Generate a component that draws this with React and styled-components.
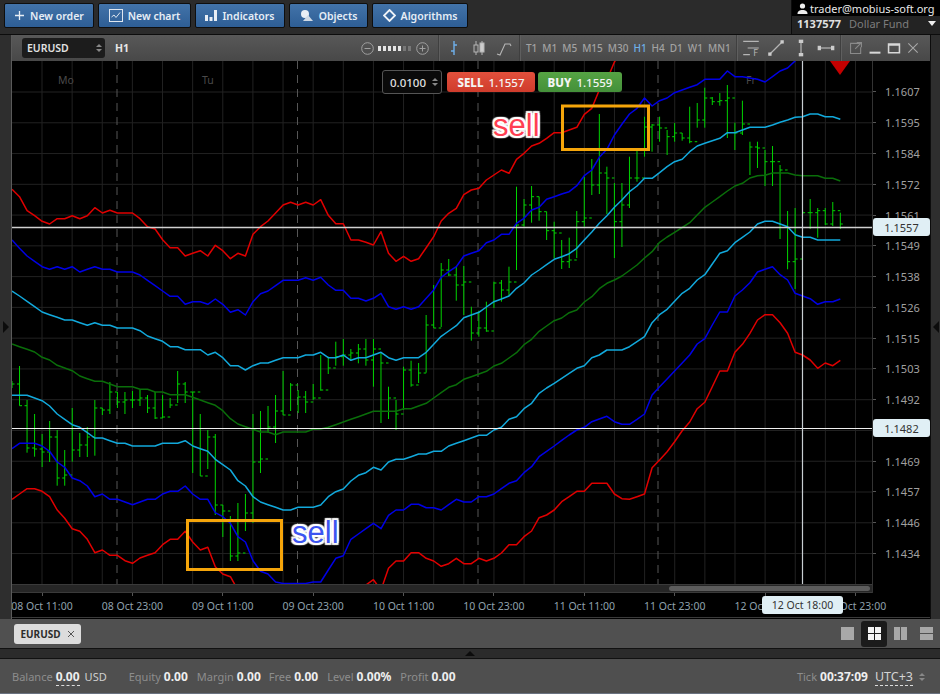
import React from "react";
import styled, { createGlobalStyle } from "styled-components";

const STEP = 7.53;
const xAt = (k) => 12 + STEP * k;
const toPoints = (ys) => ys.map((y, k) => `${xAt(k).toFixed(1)},${y}`).join(" ");

const upperRed = [189.3,196.7,210.7,215.7,221.3,224,218.7,218.7,215.7,218.7,215.7,207.7,213,210.3,213,213,213,218.7,226.7,229,239.7,247.7,247.7,256,253.3,250.7,256,245.3,250.7,258.7,253.3,256,234.3,226.7,221,213,205,202.3,205,202.3,205,199.7,215.3,223.7,223.7,240,240,242.3,245,231.7,253.3,261.3,256.3,261.3,258.7,247.7,236.7,221,213.3,208.3,194.7,190,188.3,180,175,170,173.3,159.3,153.3,146,143.3,138.3,132.7,132.7,130,127.3,114.3,108.3,90,80,62,50];
const upperBlue = [240,248.3,256,261.3,266.7,269.3,266.7,269.3,266.7,272,269.3,266.7,269.3,269.3,272,272,272,275,280.3,285.7,291,296.3,296.3,304.3,301.7,301.7,304.3,299,304.3,312.3,309.7,315,301.7,293.7,291,285.7,280.3,280.3,280.3,277.7,280.3,277.3,285,290.3,290.3,298.3,298.3,301,298.3,293.3,306.7,309.3,306.7,309.3,306.7,298.3,290,277.3,271.7,266.7,256,253.3,250.7,242.7,240,234.3,234.3,223.3,218.3,210,207.3,199.3,196.7,194,191.7,185.7,175.7,170,157.3,149.3,135,124.3,114,108.3,98,106,100.7,98,92.7,90,87.3,84.7,79.3,79.3,79.3,71,76.7,76.7,78,79.3,82,76.7,71,68,61,50];
const upperCyan = [291,296,301.3,306.7,312,314.7,317.3,320,320,322.7,325.3,322.7,325.3,325.3,328,328,328,330.7,336,338.7,341.3,346.7,346.7,349.7,349.7,349.7,355,352.3,357.7,365.7,365.7,370,365.7,363,363,360.3,357.7,357.7,357.7,355,355,352.3,357.7,357.7,355,360.3,357.7,357.7,355,352.3,357.7,360.3,357.7,357.7,357.7,352.3,344.3,336.3,331,325.7,317.7,315,312.3,307,301.7,299,296,288.3,283,275,270,264.7,259.3,256.7,253.7,248.3,240,232,223.3,215.7,207.3,200,191.7,186,178.3,178.3,172.7,166.7,161.7,159.3,151.7,146,143.3,140.7,138.3,132.7,132.7,130,127.3,127.3,127.3,125,122.3,120,117.3,116.7,114,114,116.7,116.7,119.3];
const midGreen = [344,346.7,349.3,352,357.3,360,365.3,368,370.7,376,378.7,381.3,381.3,384,386.7,386.7,386.7,389.3,389.3,392,392,394.7,394.7,394.7,397.3,400,402.7,405.3,410.7,418.7,424,426.7,429.3,432,432,434.7,432,432,432,432,429.3,429,427.3,424.7,422,419.3,416.7,414,411.3,411.3,411.3,411.3,408.7,408.7,406,403.3,398,392.7,387.3,384.7,379.3,376.7,374,371.3,366,363.3,358,352.7,344.7,339.3,331.3,326,320.7,318,312.7,310,302,296.7,288.7,283.3,280,276,270.5,265,258,251.7,242.3,237,232.3,227.5,222.7,215,207.3,202,196.7,191,186,183.3,178,175.7,175.3,173,173,173,175,175.7,175.7,175.7,178.3,178.3,181];
const lowerCyan = [395.3,395.3,395.3,398,400.7,406,414,419.3,424.7,427.3,432.7,438,438,440.7,443.3,443.3,446,446,446,446,443.3,443.3,443.3,440.7,446,448.7,451.3,459.3,464.7,470,480.7,486,496.7,502,504.7,507.3,510,510,507.3,507.3,507.3,505,496.7,491.7,489,481,475.3,472.7,467.3,470,462,459.3,459.3,456.7,454,454,451.3,451.3,446,443.3,440.7,438,435.3,435.3,430,427.3,419.3,416.7,408.7,403.3,393.3,388,383.3,378.3,373.3,368.3,365.7,357.7,355,350,350,350,346.7,341.7,336.7,322.7,314.7,309.3,301.3,293.3,288.3,280,274.7,264,253.3,250.7,242.7,237.3,232,224,221.3,221.3,224,226.7,234.7,237.3,237.3,240,240,240,240];
const lowerBlue = [448.7,443.3,443.3,443.3,446,451.3,462,467.3,478,480.7,486,496.7,494,499.3,499.3,502,504.7,502,499.3,499.3,494,491.3,491.3,486,494,499.3,499.3,512.7,516.7,523.3,536.7,542,560.7,571.3,574,582,583.5,583.5,583.5,583.5,582,582,570,558.3,555.7,539.3,534,528.7,523.3,528.7,515.3,510,510,504.3,504.3,507.7,507.7,510,504.7,499.3,502,502,496.7,496.7,494,488.7,483.3,480.7,472.7,466.7,456.7,451.3,446,440.3,435,430,427.3,421.7,419,416.3,421.7,424.3,424.3,419.3,414,395,386.7,379,371,363,355,344,338.7,325,312,312,296,290,282.7,272,269.3,266.7,274.7,280,293.3,296,298.7,304.3,301.7,301.7,299];
const lowerRed = [499.3,494,488.7,488.7,491.3,496.7,510,518.3,528.7,531.3,539.3,552.7,550,555.3,555.3,560.7,563.3,558,555.3,552.7,544.7,539.3,539.3,531.3,542,550,547.3,566.7,574,576.7,590,600,600,600,600,600,600,600,600,600,600,600,600,600,600,600,600,585,579.7,590,568.3,561,561,552.7,552.7,558.3,561,566.3,563.7,558.3,563.7,563.7,558.3,561,558.3,553,544.7,544.7,536.7,531,517.7,515,510,501.7,496.7,491.3,491.3,483.3,483.3,483.3,494,498.7,499.3,496.7,494,467.7,460,451.7,441.7,430.7,422,408.7,402.3,386.7,371,371,352.3,344.3,333.3,320,314.7,314.7,322.7,333.3,352.3,355,360,368.3,363,365.7,360.3];

// high, low, close per hour bar
const bars = [[381,388,384],[366,405.7,405.7],[400,452.7,448],[414,456.7,449],[434,467,452],[421,462,437],[430,485.7,478],[450,485.7,475],[408,461.7,450],[433,457,445],[427,457,437],[400,455.7,408],[408,415,410],[382,414,392],[392,408,402],[392,414,400],[391,408,400],[390,406,398],[395,413,408],[392,419,418],[395,418,417],[398,408,405],[371,403,384],[382,403,392],[392,473,392],[414,476,476],[430,469,437],[434,515,505],[505,537,511],[516,561,556],[503,561,553],[494,531,513],[414,523,462],[411,473,459],[406,433,427],[395,443,411],[371,415,415],[383,411,385],[390,413,397],[391,413,402],[384,400,398],[355,390.7,390],[356.7,374,368],[341.7,365.7,356.7],[339,365.7,355],[349,360,353],[344,363.3,349],[339,365.7,360],[339,386.7,349],[353,423,363],[386.7,419,398],[400,430,414],[366.7,410,370],[360.7,386.7,385],[363,383,373],[315,372.7,325],[285,328,328],[263,327,270],[259,276,275],[266.7,300.7,285],[266,315,282],[306.7,340.7,333],[310.7,336.7,328],[301.7,331.7,331],[281.7,308,283],[280,301.7,290],[266.7,296,282],[186.7,270,225],[199,226.7,205],[186,222.7,196.7],[196.7,220.7,211.7],[211.7,240,230.7],[221.7,258.3,233],[240,269,261.7],[237.7,268,260],[211,258,221.7],[176.7,226.7,218],[159,195,185],[114,194,173],[166.7,214,178],[183,258,221.7],[183,247,205],[156.7,208,178],[148,181.7,178],[116.7,156.7,127],[124,151.7,125],[116.7,141.7,128],[130,155,136.7],[123,141.7,133],[133,140.7,138],[106.7,143.3,141.7],[103,127.7,120],[87.7,127.7,98],[97,105,101.7],[93,105.7,100.7],[85,138,98],[122.7,150,133],[100.7,135,124],[141.7,175,147],[141.7,168,148],[150,186,161.7],[146,186,161.7],[165,239,170],[211,269.3,261.7],[208,289,259],[211,214,212.7],[199,229,212.7],[208,237.7,210.7],[208,225,224],[202,226,210.7],[212.7,229,224]];

// the empty slot sits behind the 1.1482 flag
const prices = ["1.1607","1.1595","1.1584","1.1572","1.1561","1.1549","1.1538","1.1526","1.1515","1.1503","1.1492","","1.1469","1.1457","1.1446","1.1434"];
const times = ["08 Oct 11:00","08 Oct 23:00","09 Oct 11:00","09 Oct 23:00","10 Oct 11:00","10 Oct 23:00","11 Oct 11:00","11 Oct 23:00","12 Oct 11:00","12 Oct 23:00"];
const frames = ["T1","M1","M5","M15","M30","H1","H4","D1","W1","MN1"];
const gridX = Array.from({ length: 28 }, (_, i) => 42 + 30.13 * i);
const gridY = prices.map((_, i) => 92 + 30.77 * i);

const GlobalStyle = createGlobalStyle`
  html, body {
    margin: 0;
    height: 100%;
    overflow: hidden;
    background: #000;
  }
  * {
    box-sizing: border-box;
  }
`;

const Page = styled.div`
  width: 940px;
  height: 694px;
  display: flex;
  flex-direction: column;
  background: #2b2b2b;
  font-family: "Noto Sans", "Open Sans", sans-serif;
  font-size: 11px;
`;

const TopBar = styled.div`
  height: 35px;
  flex: none;
  display: flex;
  padding-left: 4px;
  gap: 4px;
  background: #2b2b2b;
  border-bottom: 1px solid #0c0c0c;
`;

const NavButton = styled.div`
  width: ${(p) => p.$w}px;
  height: 25px;
  margin-top: 3px;
  display: flex;
  align-items: center;
  justify-content: center;
  gap: 5px;
  color: #e6edf5;
  font-weight: 600;
  font-size: 10.5px;
  border: 1px solid #0e0e0e;
  border-radius: 2px;
  background: linear-gradient(#4273a9, #2e5e95);
`;

const Account = styled.div`
  margin-left: auto;
  width: 149px;
  display: flex;
  flex-direction: column;
  border-left: 1px solid #0c0c0c;
`;

const AccountMail = styled.div`
  height: 16px;
  flex: none;
  display: flex;
  align-items: center;
  gap: 2px;
  padding-left: 5px;
  background: #000;
  color: #e8e8e8;
  font-size: 11px;
  font-weight: 400;
  white-space: nowrap;
`;

const AccountRow = styled.div`
  flex: 1;
  display: flex;
  align-items: center;
  padding: 0 4px 3px 5px;
  gap: 8px;
  background: #232323;
  color: #7d7d7d;
  font-size: 11px;
  b {
    color: #e0e0e0;
    font-weight: 700;
  }
`;

const Caret = styled.span`
  margin-left: auto;
  width: 0;
  height: 0;
  border-left: 4px solid transparent;
  border-right: 4px solid transparent;
  border-top: 5px solid #eee;
`;

const Workspace = styled.div`
  height: 584px;
  flex: none;
  display: flex;
  background: #0c0c0c;
`;

const Rail = styled.div`
  width: ${(p) => p.$w}px;
  flex: none;
  display: flex;
  align-items: center;
  justify-content: center;
  background: #2e2e2e;
  ${(p) => (p.$left ? "border-right: 1px solid #5a5a5a;" : "border-left: 1px solid #0c0c0c;")}
`;

const RailArrow = styled.span`
  width: 0;
  height: 0;
  border-top: 6px solid transparent;
  border-bottom: 6px solid transparent;
  ${(p) => (p.$left ? "border-left: 6px solid #0c0c0c;" : "border-right: 6px solid #0c0c0c;")}
`;

const ChartWindow = styled.div`
  width: 918px;
  flex: none;
  display: flex;
  flex-direction: column;
  background: #000;
`;

const ChartHead = styled.div`
  height: 26px;
  flex: none;
  display: flex;
  align-items: stretch;
  background: linear-gradient(#585858, #484848);
  color: #a6a6a6;
`;

const Select = styled.div`
  width: 83px;
  height: 20px;
  margin: 3px 0 0 10px;
  display: flex;
  align-items: center;
  justify-content: space-between;
  padding: 0 3px 0 5px;
  background: #1c1c1c;
  border-radius: 3px;
  color: #e2e2e2;
  font-weight: 600;
  font-size: 10.5px;
`;

const Spin = styled.span`
  display: inline-flex;
  flex-direction: column;
  gap: 2px;
  &::before,
  &::after {
    content: "";
    width: 0;
    height: 0;
    border-left: 3px solid transparent;
    border-right: 3px solid transparent;
  }
  &::before {
    border-bottom: 3px solid #888;
  }
  &::after {
    border-top: 3px solid #888;
  }
`;

const Period = styled.div`
  margin-left: 10px;
  align-self: center;
  color: #e6e6e6;
  font-weight: 700;
  font-size: 10.5px;
`;

const ZoomGroup = styled.div`
  margin-left: auto;
  width: 77px;
  display: flex;
  align-items: center;
  gap: 3px;
`;

const ZoomDots = styled.div`
  display: flex;
  gap: 2px;
  margin: 0 2px 0 1px;
`;

const ZoomDot = styled.span`
  width: 3px;
  height: 5px;
  background: ${(p) => (p.$on ? "#e4e4e4" : "#777")};
`;

const HeadGroup = styled.div`
  width: ${(p) => p.$w}px;
  flex: none;
  display: flex;
  align-items: center;
  padding-left: ${(p) => p.$pad}px;
  gap: ${(p) => p.$gap}px;
  border-left: 1px solid #3f3f3f;
  box-shadow: inset 1px 0 0 #5f5f5f;
`;

const Frame = styled.span`
  color: ${(p) => (p.$on ? "#6fb0ea" : "#a2a2a2")};
  font-weight: 500;
  font-size: 10px;
`;

const PlotRow = styled.div`
  height: 532px;
  flex: none;
  display: flex;
`;

const PlotColumn = styled.div`
  width: 860px;
  flex: none;
  display: flex;
  flex-direction: column;
`;

const Plot = styled.svg`
  display: block;
  width: 860px;
  height: 523px;
  flex: none;
  background: #000;
`;

const ScrollStrip = styled.div`
  height: 9px;
  flex: none;
  display: flex;
  justify-content: flex-end;
  align-items: center;
  padding-right: 2px;
  background: #262626;
  border-top: 1px solid #3a3a3a;
  border-bottom: 1px solid #3a3a3a;
`;

const ScrollThumb = styled.div`
  width: 201px;
  height: 5px;
  border-radius: 3px;
  background: #5c5c5c;
`;

const PriceAxis = styled.div`
  flex: 1;
  display: flex;
  flex-direction: column;
  padding-top: 15.6px;
  background: #000;
  border-left: 1px solid #333;
`;

const PriceTick = styled.div`
  height: 30.77px;
  flex: none;
  display: flex;
  align-items: center;
  gap: 9px;
  color: #a0a0a0;
  font-size: 11px;
  letter-spacing: 0.1px;
  &::before {
    content: "";
    width: 3px;
    height: 1px;
    background: #555;
  }
`;

const TimeAxis = styled.div`
  height: 25px;
  flex: none;
  display: flex;
  overflow: hidden;
  background: #000;
  border-bottom: 1px solid #3a3a3a;
`;

const TimeTick = styled.div`
  flex: none;
  width: 90.4px;
  display: flex;
  flex-direction: column;
  align-items: center;
  gap: 3px;
  color: #8fa0ad;
  font-size: 10.5px;
  white-space: nowrap;
  &:first-child {
    margin-left: -15.2px;
  }
  &::before {
    content: "";
    width: 1px;
    height: 3px;
    background: #555;
  }
`;

const ChartBody = styled.div`
  flex: 1;
  min-height: 0;
  display: flex;
  flex-direction: column;
  position: relative;
`;

const Flag = styled.div`
  position: absolute;
  left: 861px;
  top: ${(p) => p.$top}px;
  width: 57px;
  height: 18px;
  display: flex;
  align-items: center;
  justify-content: center;
  border-radius: 3px;
  background: #e0eff5;
  color: #333;
  font-size: 11px;
`;

const TimeFlag = styled(Flag)`
  left: 750px;
  top: 535px;
  width: 81px;
  font-size: 10.5px;
`;

const OrderBar = styled.div`
  position: absolute;
  left: 370px;
  top: 9px;
  display: flex;
  align-items: center;
  gap: 3px;
`;

const Amount = styled.div`
  width: 60px;
  height: 24px;
  margin-right: 2px;
  display: flex;
  align-items: center;
  justify-content: space-between;
  padding: 0 3px 0 7px;
  background: #0a0a0a;
  border: 1px solid #555;
  border-radius: 3px;
  color: #e0e0e0;
  font-size: 11.5px;
  font-weight: 500;
`;

const Deal = styled.div`
  width: ${(p) => p.$w}px;
  height: 20px;
  display: flex;
  align-items: center;
  justify-content: center;
  gap: 5px;
  border-radius: 3px;
  color: #f4f4f4;
  font-size: 11.5px;
  font-weight: 500;
  background: ${(p) => (p.$buy ? "linear-gradient(#56a344, #44903a)" : "linear-gradient(#e2503c, #cf3c2c)")};
  b {
    font-weight: 800;
  }
`;

const Note = styled.div`
  position: absolute;
  left: ${(p) => p.$x}px;
  top: ${(p) => p.$y}px;
  color: ${(p) => p.$color};
  font-family: "Liberation Sans", Arial, sans-serif;
  font-size: 31px;
  line-height: 30px;
  text-shadow: 2px 0 1px #fff, -2px 0 1px #fff, 0 2px 1px #fff, 0 -2px 1px #fff, 2px 2px 1px #fff, -2px 2px 1px #fff, 2px -2px 1px #fff, -2px -2px 1px #fff;
`;

const DayMark = styled.text`
  fill: #4a4a4a;
  font-size: 10.5px;
`;

const TabBar = styled.div`
  height: 30px;
  flex: none;
  display: flex;
  align-items: center;
  padding-left: 14px;
  background: #505050;
  border-bottom: 1px solid #111;
`;

const Tab = styled.div`
  width: 67px;
  height: 20px;
  display: flex;
  align-items: center;
  justify-content: center;
  gap: 6px;
  background: #dcdcdc;
  border-radius: 3px;
  color: #2c2c2c;
  font-weight: 700;
  font-size: 10px;
`;

const Layouts = styled.div`
  margin-left: auto;
  display: flex;
  align-items: center;
`;

const LayoutCell = styled.div`
  width: 26.3px;
  height: 26px;
  display: flex;
  align-items: center;
  justify-content: center;
  border-radius: 3px;
  background: ${(p) => (p.$on ? "#1b1b1b" : "transparent")};
`;

const Strip = styled.div`
  height: 10px;
  flex: none;
  display: flex;
  justify-content: center;
  align-items: center;
  background: #2b2b2b;
  border-bottom: 1px solid #111;
`;

const StripArrow = styled.span`
  width: 0;
  height: 0;
  border-left: 5px solid transparent;
  border-right: 5px solid transparent;
  border-bottom: 5px solid #0c0c0c;
`;

const StatusBar = styled.div`
  flex: 1;
  display: flex;
  align-items: center;
  padding: 1px 15px 0 12px;
  background: #4f4f4f;
  color: #8d8d8d;
  font-size: 11px;
  border-bottom: 1px solid #6a7280;
  white-space: nowrap;
`;

const Stat = styled.div`
  display: flex;
  align-items: baseline;
  gap: 3px;
  margin-right: ${(p) => p.$gap}px;
`;

const Value = styled.span`
  color: #eee;
  font-weight: 700;
  font-size: 12px;
  ${(p) => p.$dashed && "border-bottom: 1px dashed #ddd;"}
`;

const Currency = styled.span`
  color: #cfcfcf;
  margin-left: 2px;
`;

const Zone = styled.span`
  color: #d4d4d4;
  font-size: 12.5px;
  margin: 0 3px 0 2px;
  border-bottom: 1px dashed #ddd;
`;

const Clock = styled.div`
  margin-left: auto;
  display: flex;
  align-items: center;
  gap: 3px;
`;

const Square = styled.svg`
  display: block;
  flex: none;
`;

const PlusIcon = () => (
  <Square width="11" height="11" viewBox="0 0 11 11">
    <path d="M5.5 1v9M1 5.5h9" stroke="#e8eef5" strokeWidth="1.3" />
  </Square>
);
const ChartIcon = () => (
  <Square width="14" height="13" viewBox="0 0 14 13" fill="none">
    <rect x="0.5" y="0.5" width="13" height="12" stroke="#dfe7f0" />
    <path d="M2.5 8l2.5-2 2 2.5 4-5" stroke="#dfe7f0" />
  </Square>
);
const BarsIcon = () => (
  <Square width="12" height="11" viewBox="0 0 12 11" fill="#e8eef5">
    <rect x="0" y="5" width="3" height="6" />
    <rect x="4.5" y="7" width="3" height="4" />
    <rect x="9" y="0" width="3" height="11" />
  </Square>
);
const ObjectsIcon = () => (
  <Square width="14" height="13" viewBox="0 0 14 13" fill="#e8eef5">
    <circle cx="5" cy="5" r="4" />
    <path d="M8 6l5 6H3z" fill="#cfd9e5" />
  </Square>
);
const DiamondIcon = () => (
  <Square width="13" height="13" viewBox="0 0 13 13" fill="none">
    <path d="M6.5 1L12 6.5 6.5 12 1 6.5z" stroke="#eef2f7" strokeWidth="1.8" />
  </Square>
);
const UserIcon = () => (
  <Square width="11" height="11" viewBox="0 0 11 11" fill="#eee">
    <circle cx="5.5" cy="3" r="2.6" />
    <path d="M0.5 11c0-3 2-4 5-4s5 1 5 4z" />
  </Square>
);
const RoundIcon = ({ plus }) => (
  <Square width="13" height="13" viewBox="0 0 13 13" fill="none" stroke="#a0a0a0">
    <circle cx="6.5" cy="6.5" r="5.8" />
    <path d={plus ? "M3.5 6.5h6M6.5 3.5v6" : "M3.5 6.5h6"} />
  </Square>
);
const ToolIcon = ({ children, size = 18, stroke = "#b5b5b5" }) => (
  <Square width={size} height={size} viewBox="0 0 18 18" fill="none" stroke={stroke}>
    {children}
  </Square>
);

const LayoutIcon = ({ rects, fill }) => (
  <Square width="13" height="13" viewBox="0 0 13 13" fill={fill}>
    {rects.map((r, i) => (
      <rect key={i} x={r[0]} y={r[1]} width={r[2]} height={r[3]} />
    ))}
  </Square>
);

const BarMarks = () => (
  <g stroke="#00d400" strokeWidth="1">
    {bars.map(([hi, lo, close], k) => {
      const x = xAt(k);
      const open = k > 0 ? bars[k - 1][2] : close;
      return (
        <path key={k} d={`M${x} ${hi}V${lo}M${x - 2.5} ${open}H${x}M${x} ${close}H${x + 2.5}`} />
      );
    })}
  </g>
);

const Band = ({ ys, color }) => (
  <polyline points={toPoints(ys)} fill="none" stroke={color} strokeWidth="1.5" strokeLinejoin="round" />
);

export default function App() {
  return (
    <>
      <GlobalStyle />
      <Page>
        <TopBar>
          <NavButton $w={90}><PlusIcon />New order</NavButton>
          <NavButton $w={93}><ChartIcon />New chart</NavButton>
          <NavButton $w={90}><BarsIcon />Indicators</NavButton>
          <NavButton $w={79}><ObjectsIcon />Objects</NavButton>
          <NavButton $w={96}><DiamondIcon />Algorithms</NavButton>
          <Account>
            <AccountMail><UserIcon />trader@mobius-soft.org</AccountMail>
            <AccountRow><b>1137577</b>Dollar Fund<Caret /></AccountRow>
          </Account>
        </TopBar>

        <Workspace>
          <Rail $w={12} $left><RailArrow $left /></Rail>
          <ChartWindow>
            <ChartHead>
              <Select>EURUSD<Spin /></Select>
              <Period>H1</Period>
              <ZoomGroup>
                <RoundIcon />
                <ZoomDots>
                  {[1, 1, 1, 1, 1, 0, 0].map((on, i) => <ZoomDot key={i} $on={on} />)}
                </ZoomDots>
                <RoundIcon plus />
              </ZoomGroup>
              <HeadGroup $w={81} $pad={6} $gap={7}>
                <ToolIcon stroke="#6fb0ea">
                  <path d="M9 2v14M9 6H12M6 12h3" strokeWidth="1.4" />
                </ToolIcon>
                <ToolIcon>
                  <path d="M6 2v14M12 2v14" />
                  <rect x="4" y="6" width="4" height="7" fill="#555" />
                  <rect x="10" y="4" width="4" height="9" fill="#ccc" />
                </ToolIcon>
                <ToolIcon>
                  <path d="M2 15l3 1 5-11h5l1 2" strokeWidth="1.1" />
                </ToolIcon>
              </HeadGroup>
              <HeadGroup $w={217} $pad={6} $gap={5}>
                {frames.map((f) => <Frame key={f} $on={f === "H1"}>{f}</Frame>)}
              </HeadGroup>
              <HeadGroup $w={104} $pad={4} $gap={5}>
                <ToolIcon size={20}>
                  <path d="M2 3h14M6 9h10M2 15h6" strokeWidth="1.1" />
                  <text x="11" y="16" fontSize="8" fill="#b5b5b5" stroke="none">F</text>
                </ToolIcon>
                <ToolIcon size={20}>
                  <path d="M4 14L14 4" strokeWidth="1.1" />
                  <rect x="2" y="13" width="3" height="3" fill="#ccc" stroke="none" />
                  <rect x="13" y="2" width="3" height="3" fill="#ccc" stroke="none" />
                </ToolIcon>
                <ToolIcon size={20}>
                  <path d="M9 3v12" strokeWidth="1.1" />
                  <rect x="7" y="1.5" width="4" height="3" fill="#ccc" stroke="none" />
                  <rect x="7" y="13.5" width="4" height="3" fill="#ccc" stroke="none" />
                </ToolIcon>
                <ToolIcon size={20}>
                  <path d="M3 9h12" strokeWidth="1.1" />
                  <rect x="1.5" y="7" width="3" height="4" fill="#ccc" stroke="none" />
                  <rect x="13.5" y="7" width="3" height="4" fill="#ccc" stroke="none" />
                </ToolIcon>
              </HeadGroup>
              <HeadGroup $w={90} $pad={8} $gap={5}>
                <ToolIcon size={14} stroke="#8a8a8a">
                  <path d="M14 3H2v13h13V8M10 2h6v6M16 2L8 10" strokeWidth="1.4" />
                </ToolIcon>
                <ToolIcon size={14} stroke="#d8d8d8">
                  <path d="M2 15h14" strokeWidth="2.6" />
                </ToolIcon>
                <ToolIcon size={14} stroke="#d8d8d8">
                  <path d="M2 4h14v11H2zM2 5h14" strokeWidth="2" />
                </ToolIcon>
                <ToolIcon size={14} stroke="#a8a8a8">
                  <path d="M3 3l12 12M15 3L3 15" strokeWidth="1.4" />
                </ToolIcon>
              </HeadGroup>
            </ChartHead>

            <ChartBody>
              <PlotRow>
                <PlotColumn>
                  <Plot viewBox="12 61 860 523">
                    <g stroke="#222" strokeWidth="1">
                      {gridX.map((x) => <path key={x} d={`M${x} 61V584`} />)}
                      {gridY.map((y) => <path key={y} d={`M12 ${y}H872`} />)}
                    </g>
                    <g stroke="#565656" strokeWidth="1" strokeDasharray="8 6">
                      {[117, 297.5, 478, 658].map((x) => <path key={x} d={`M${x} 61V584`} />)}
                    </g>
                    <DayMark x="58" y="84">Mo</DayMark>
                    <DayMark x="202" y="84">Tu</DayMark>
                    <DayMark x="746" y="84">Fr</DayMark>
                    <BarMarks />
                    <Band ys={midGreen} color="#0a6e0a" />
                    <Band ys={upperCyan} color="#12a9dc" />
                    <Band ys={lowerCyan} color="#12a9dc" />
                    <Band ys={upperBlue} color="#0000e6" />
                    <Band ys={lowerBlue} color="#0000e6" />
                    <Band ys={upperRed} color="#e00000" />
                    <Band ys={lowerRed} color="#e00000" />
                    <g fill="none" stroke="#f5a50a" strokeWidth="3">
                      <rect x="187.5" y="520.5" width="94" height="49" />
                      <rect x="562.5" y="106" width="86" height="43.5" />
                    </g>
                    <path d="M830 61h20l-10 14z" fill="#c40000" />
                    <path d="M12 227.5H872" stroke="#d0d0d0" strokeWidth="1.5" />
                    <path d="M12 428.5H872" stroke="#f0f0f0" strokeWidth="1" />
                    <path d="M802.5 61V584" stroke="#c8ced2" strokeWidth="1.2" />
                  </Plot>
                  <ScrollStrip><ScrollThumb /></ScrollStrip>
                </PlotColumn>
                <PriceAxis>
                  {prices.map((p, i) => <PriceTick key={i}>{p}</PriceTick>)}
                </PriceAxis>
              </PlotRow>
              <TimeAxis>
                {times.map((t) => <TimeTick key={t}>{t}</TimeTick>)}
              </TimeAxis>

              <OrderBar>
                <Amount>0.0100<Spin /></Amount>
                <Deal $w={88}><b>SELL</b>1.1557</Deal>
                <Deal $w={84} $buy><b>BUY</b>1.1559</Deal>
              </OrderBar>
              <Note $x={481} $y={50} $color="#ff3f52">sell</Note>
              <Note $x={280} $y={457} $color="#3c55f0">sell</Note>
              <Flag $top={157}>1.1557</Flag>
              <Flag $top={358}>1.1482</Flag>
              <TimeFlag>12 Oct 18:00</TimeFlag>
            </ChartBody>
          </ChartWindow>
          <Rail $w={10}><RailArrow /></Rail>
        </Workspace>

        <TabBar>
          <Tab>
            EURUSD
            <Square width="8" height="8" viewBox="0 0 8 8">
              <path d="M1 1l6 6M7 1L1 7" stroke="#555" strokeWidth="1" />
            </Square>
          </Tab>
          <Layouts>
            <LayoutCell><LayoutIcon fill="#a8a8a8" rects={[[0, 0, 13, 13]]} /></LayoutCell>
            <LayoutCell $on><LayoutIcon fill="#f4f4f4" rects={[[0, 0, 6, 6], [7, 0, 6, 6], [0, 7, 6, 6], [7, 7, 6, 6]]} /></LayoutCell>
            <LayoutCell><LayoutIcon fill="#a8a8a8" rects={[[0, 0, 6, 13], [7, 0, 6, 13]]} /></LayoutCell>
            <LayoutCell><LayoutIcon fill="#a8a8a8" rects={[[0, 0, 13, 6], [0, 7, 13, 6]]} /></LayoutCell>
          </Layouts>
        </TabBar>

        <Strip><StripArrow /></Strip>

        <StatusBar>
          <Stat $gap={22}>Balance <Value $dashed>0.00</Value><Currency>USD</Currency></Stat>
          <Stat $gap={9}>Equity <Value>0.00</Value></Stat>
          <Stat $gap={8}>Margin <Value>0.00</Value></Stat>
          <Stat $gap={9}>Free <Value>0.00</Value></Stat>
          <Stat $gap={9}>Level <Value>0.00%</Value></Stat>
          <Stat $gap={0}>Profit <Value>0.00</Value></Stat>
          <Clock>
            <Stat $gap={2}>Tick <Value>00:37:09</Value></Stat>
            <Zone>UTC+3</Zone>
            <Spin />
          </Clock>
        </StatusBar>
      </Page>
    </>
  );
}
